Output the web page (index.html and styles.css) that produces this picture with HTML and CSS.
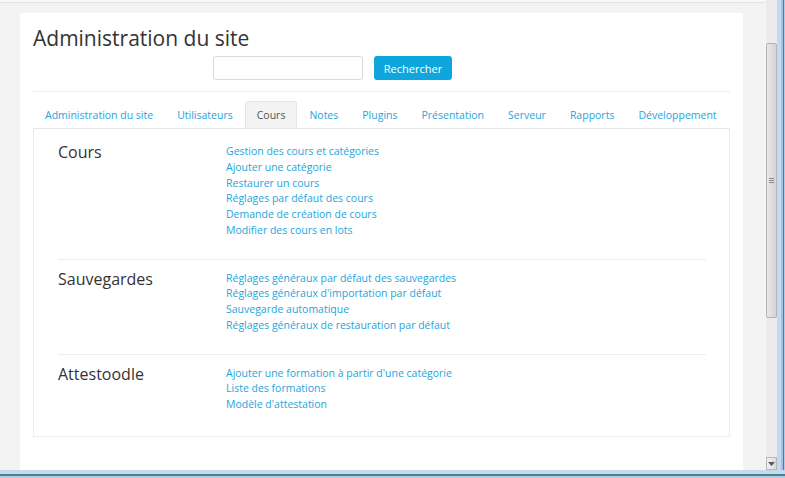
FILE: index.html
```html
<!DOCTYPE html>
<html>
<head>
    <title>Administration du site</title>
    <link rel="stylesheet" href="styles.css">
</head>
<body>
    <div class="screen">
        <div class="main">
            <div class="viewport">
                <div class="topline"></div>
                <div class="page">
                    <h1>Administration du site</h1>
                    <form class="search">
                        <input type="text" name="query">
                        <button type="submit">Rechercher</button>
                    </form>
                    <div class="rule"></div>

                    <ul class="tabs">
                        <li><a href="#">Administration du site</a></li>
                        <li><a href="#">Utilisateurs</a></li>
                        <li class="active"><a href="#">Cours</a></li>
                        <li><a href="#">Notes</a></li>
                        <li><a href="#">Plugins</a></li>
                        <li><a href="#">Présentation</a></li>
                        <li><a href="#">Serveur</a></li>
                        <li><a href="#">Rapports</a></li>
                        <li><a href="#">Développement</a></li>
                    </ul>

                    <div class="tab-panel">
                        <div class="group">
                            <h3>Cours</h3>
                            <ul class="links">
                                <li><a href="#">Gestion des cours et catégories</a></li>
                                <li><a href="#">Ajouter une catégorie</a></li>
                                <li><a href="#">Restaurer un cours</a></li>
                                <li><a href="#">Réglages par défaut des cours</a></li>
                                <li><a href="#">Demande de création de cours</a></li>
                                <li><a href="#">Modifier des cours en lots</a></li>
                            </ul>
                        </div>
                        <div class="group">
                            <h3>Sauvegardes</h3>
                            <ul class="links">
                                <li><a href="#">Réglages généraux par défaut des sauvegardes</a></li>
                                <li><a href="#">Réglages généraux d'importation par défaut</a></li>
                                <li><a href="#">Sauvegarde automatique</a></li>
                                <li><a href="#">Réglages généraux de restauration par défaut</a></li>
                            </ul>
                        </div>
                        <div class="group">
                            <h3>Attestoodle</h3>
                            <ul class="links">
                                <li><a href="#">Ajouter une formation à partir d'une catégorie</a></li>
                                <li><a href="#">Liste des formations</a></li>
                                <li><a href="#">Modèle d'attestation</a></li>
                            </ul>
                        </div>
                    </div>
                </div>
            </div>

            <!-- window scrollbar -->
            <div class="scrollbar">
                <div class="thumb"><span class="grip"></span></div>
                <div class="arrow-down">
                    <svg width="7" height="4" viewBox="0 0 7 4"><path d="M0 0h7L3.5 4z" fill="#5a5a5a"/></svg>
                </div>
            </div>
            <div class="frame-right"></div>
        </div>
        <div class="frame-bottom"></div>
    </div>
</body>
</html>
```

FILE: styles.css
```css
body {
    margin: 0;
    font-family: "Open Sans", "DejaVu Sans", sans-serif;
    color: #333;
    overflow: hidden;
}

.screen {
    width: 785px;
    height: 478px;
    display: flex;
    flex-direction: column;
}

.main {
    flex: 1;
    display: flex;
    min-height: 0;
}

.viewport {
    width: 766px;
    background-color: #f3f3f3;
    overflow: hidden;
}

.topline {
    height: 2px;
    background-color: #f8f8f8;
    border-bottom: 1px solid #e3e3e3;
}

.page {
    margin: 10px 22px 0 20px;
    padding: 10px 13px;
    background-color: #fff;
    min-height: 600px;
}

h1 {
    margin: 0;
    font-size: 21px;
    font-weight: 400;
    line-height: 30px;
    color: #333;
}

/* search form */
.search {
    display: flex;
    gap: 11px;
    margin: 3px 0 0;
    padding-left: 180px;
}

.search input {
    width: 150px;
    height: 24px;
    box-sizing: border-box;
    border: 1px solid #dcdcdc;
    border-radius: 3px;
    padding: 2px 6px;
}

.search button {
    width: 78px;
    height: 24px;
    border: none;
    border-radius: 3px;
    background-color: #0ea6dc;
    color: #fff;
    font-family: inherit;
    font-size: 11px;
    cursor: pointer;
}

.rule {
    margin-top: 11px;
    border-top: 1px solid #ececec;
}

/* tabs */
.tabs {
    display: flex;
    list-style: none;
    margin: 9px 0 0;
    padding: 0;
}

.tabs li {
    flex-shrink: 0;
}

.tabs a {
    display: block;
    padding: 5px 11px;
    font-size: 10.5px;
    line-height: 16px;
    white-space: nowrap;
    color: #1ea5dc;
    text-decoration: none;
    border: 1px solid transparent;
    border-bottom: none;
    border-radius: 3px 3px 0 0;
}

.tabs .active a {
    background-color: #f3f3f3;
    border-color: #e4e4e4;
    color: #555;
}

.tab-panel {
    border: 1px solid #ededed;
    border-top-color: #e6e6e6;
    padding: 4px 23px 3px 24px;
}

.group {
    display: grid;
    grid-template-columns: 168px 1fr;
    padding: 11px 0 20px;
    border-bottom: 1px solid #ececec;
}

.group:last-child {
    border-bottom: none;
}

.group h3 {
    margin: -2px 0 0;
    font-size: 16px;
    font-weight: 400;
    line-height: 21px;
    color: #333;
}

.links {
    list-style: none;
    margin: 0;
    padding: 0;
    font-size: 10.5px;
    line-height: 15.75px;
}

.links a {
    color: #1ea5dc;
    text-decoration: none;
}

/* scrollbar and window frame */
.scrollbar {
    width: 11px;
    position: relative;
    background-color: #ebebeb;
    border-left: 1px solid #f6f6f6;
}

.thumb {
    position: absolute;
    top: 43px;
    left: 0;
    width: 9px;
    height: 273px;
    border: 1px solid #b3b3b3;
    border-radius: 2px;
    background: linear-gradient(to right, #e8e8e8, #d4d4d4);
    display: flex;
    align-items: center;
    justify-content: center;
}

.grip {
    width: 5px;
    height: 5px;
    background: repeating-linear-gradient(#8a8a8a 0 1px, transparent 1px 2px);
}

.arrow-down {
    position: absolute;
    left: 0;
    bottom: 0;
    width: 9px;
    height: 11px;
    border: 1px solid #b8b8b8;
    background: linear-gradient(to right, #f0f0f0, #dadada);
    display: flex;
    align-items: center;
    justify-content: center;
}

.frame-right {
    width: 8px;
    background: linear-gradient(to right, #c4daef 0 4px, #a3c2e2 4px 6px, #4f7f8c 6px 7px, #b0cbe6 7px);
}

.frame-bottom {
    height: 8px;
    background: linear-gradient(#c3d9ef 0 4px, #4e8089 4px 6px, #b3cce4 6px);
}
```
